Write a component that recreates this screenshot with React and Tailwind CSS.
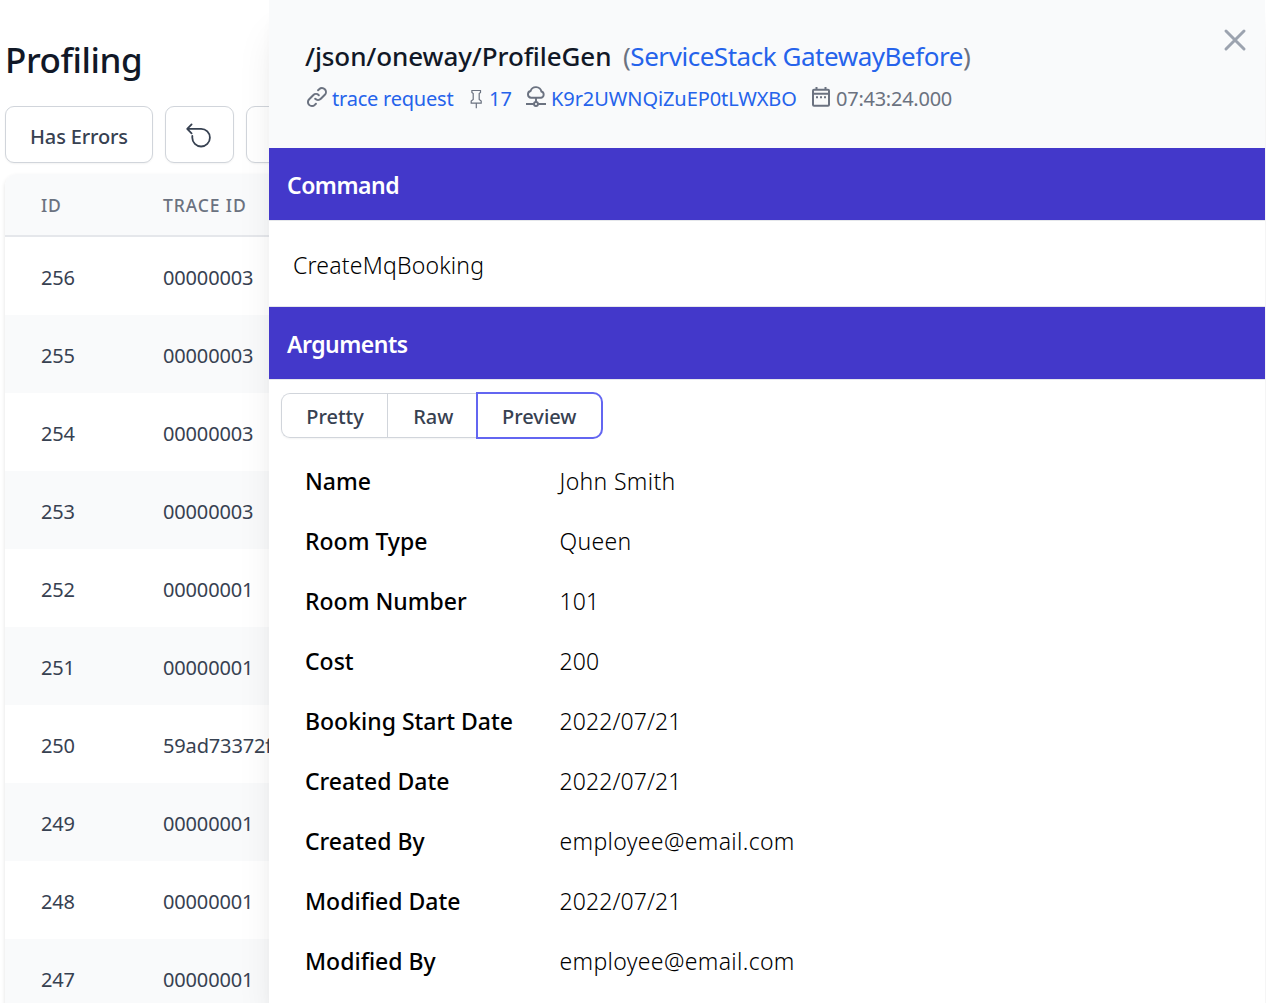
const rows = [
  ["256", "00000003"],
  ["255", "00000003"],
  ["254", "00000003"],
  ["253", "00000003"],
  ["252", "00000001"],
  ["251", "00000001"],
  ["250", "59ad73372f"],
  ["249", "00000001"],
  ["248", "00000001"],
  ["247", "00000001"],
];

const fields = [
  ["Name", "John Smith"],
  ["Room Type", "Queen"],
  ["Room Number", "101"],
  ["Cost", "200"],
  ["Booking Start Date", "2022/07/21"],
  ["Created Date", "2022/07/21"],
  ["Created By", "employee@email.com"],
  ["Modified Date", "2022/07/21"],
  ["Modified By", "employee@email.com"],
];

function UndoIcon() {
  return (
    <svg className="mr-[2px] h-7 w-7" viewBox="0 0 28 28" fill="none" stroke="currentColor" strokeWidth="1.8" strokeLinecap="round" strokeLinejoin="round">
      <path d="M6.6 3.4 2.2 7.9l4.4 4.5M2.6 7.9h13.5a8.8 8.8 0 1 1-8.8 8.8V15" />
    </svg>
  );
}

function LinkIcon() {
  return (
    <svg className="h-6 w-6" viewBox="0 0 24 24" fill="none" stroke="currentColor" strokeWidth="2" strokeLinecap="round" strokeLinejoin="round">
      <path d="M13.828 10.172a4 4 0 00-5.656 0l-4 4a4 4 0 105.656 5.656l1.102-1.101m-.758-4.899a4 4 0 005.656 0l4-4a4 4 0 00-5.656-5.656l-1.1 1.1" />
    </svg>
  );
}

function PinIcon() {
  return (
    <svg className="h-6 w-6" viewBox="0 0 24 24" fill="none" stroke="currentColor" strokeWidth="1.2">
      <path d="M7.9 5.5h8.6v2l-1.3 1v6l2 1.5v2.1H7.2V16l2-1.5v-6l-1.3-1zM12.3 18.1v5.2" />
    </svg>
  );
}

function CloudIcon() {
  return (
    <svg className="h-6 w-6" viewBox="0 0 24 24" fill="none" stroke="currentColor" strokeWidth="1.9">
      <path d="M7.1 12.7a3.4 3.4 0 0 1-.5-6.7 5.6 5.6 0 0 1 10.8.5 3.2 3.2 0 0 1-.3 6.2zM12 12.7v4.4M2 19h7.8M14.2 19H22" />
      <circle cx="12" cy="19" r="2" />
    </svg>
  );
}

function CalendarIcon() {
  return (
    <svg className="h-6 w-6" viewBox="0 0 24 24" fill="none" stroke="currentColor" strokeWidth="2">
      <rect x="4" y="4.8" width="16" height="16" rx="1" />
      <path d="M7.5 1.9V5M16.5 1.9V5M4 8.8h16" />
      <path d="M7 12.3h2M11 12.3h2M15 12.3h2" />
    </svg>
  );
}

function CloseIcon() {
  return (
    <svg className="h-9 w-9" viewBox="0 0 24 24" fill="none" stroke="currentColor" strokeWidth="2" strokeLinecap="round">
      <path d="M6 18L18 6M6 6l12 12" />
    </svg>
  );
}

function SectionTitle({ children }) {
  return (
    <h3 className="flex h-[73px] shrink-0 items-center border-b border-[#e5e7eb] bg-[#4338ca] pl-[18px] pt-[3px] text-[23px] font-semibold tracking-[-0.5px] text-white">
      {children}
    </h3>
  );
}

function Profiles() {
  return (
    <div className="w-[269px] shrink-0 overflow-hidden pl-[5px]">
      <h1 className="pt-[39px] text-[35px] font-medium leading-[42px] tracking-[-0.45px] text-[#111827]">Profiling</h1>
      <div className="mt-[25px] flex w-[400px] gap-3">
        <button className="flex h-[57px] w-[148px] items-center justify-center rounded-[9px] border border-[#d1d5db] bg-white pt-[4px] text-[20px] font-medium tracking-[-0.15px] text-[#374151] shadow-xs">Has Errors</button>
        <button className="flex h-[57px] w-[69px] items-center justify-center rounded-[9px] border border-[#d1d5db] bg-white text-[#374151] shadow-xs"><UndoIcon /></button>
        <button className="h-[57px] w-[69px] rounded-[9px] border border-[#d1d5db] bg-white shadow-xs" />
      </div>
      <div className="mt-[11px] w-[600px] overflow-hidden rounded-t-xl text-[#1f2937] shadow-[0_2px_4px_rgba(0,0,0,0.12)]">
        <div className="grid h-[63px] grid-cols-[122px_1fr] items-center border-b-2 border-[#e5e7eb] bg-[#f9fafb] pl-9 pt-[2px] text-[17.5px] font-medium tracking-[0.9px] text-[#6b7280]">
          <span>ID</span>
          <span>TRACE ID</span>
        </div>
        {rows.map(([id, trace]) => (
          <div key={id} className="grid h-[78px] grid-cols-[122px_1fr] items-center pl-9 pt-[4px] text-[20px] tracking-[-0.15px] text-[#374151] even:bg-white odd:bg-[#f9fafb]">
            <span>{id}</span>
            <span>{trace}</span>
          </div>
        ))}
      </div>
    </div>
  );
}

function Details() {
  return (
    <div className="z-10 flex w-[996px] shrink-0 flex-col bg-white shadow-[0_30px_38px_-8px_rgba(0,0,0,0.1),0_12px_15px_-9px_rgba(0,0,0,0.1)]">
      <header className="flex h-[148px] shrink-0 justify-between bg-[#f9fafb] pl-9 pr-3 text-[#6b7280]">
        <div className="whitespace-nowrap pt-[38px]">
          <h2 className="flex text-[26px] leading-9">
            <span className="w-[308px] font-medium tracking-[-0.1px] text-[#111827]">/json/oneway/ProfileGen</span>
            <span className="ml-[10px] tracking-[-0.46px]">(<a className="text-[#2563eb]">ServiceStack GatewayBefore</a>)</span>
          </h2>
          <div className="mt-px flex h-12 text-[20px] leading-[48px]">
            <span className="mt-[10px]"><LinkIcon /></span>
            <a className="ml-[3px] w-[121px] tracking-[-0.22px] text-[#2563eb]">trace request</a>
            <span className="ml-[11px] mt-[10px]"><PinIcon /></span>
            <a className="ml-px w-[23px] text-[#2563eb]">17</a>
            <span className="ml-[12px] mt-[10px]"><CloudIcon /></span>
            <a className="ml-[3px] w-[244px] tracking-[-0.08px] text-[#2563eb]">K9r2UWNQiZuEP0tLWXBO</a>
            <span className="ml-[14px] mt-[10px]"><CalendarIcon /></span>
            <span className="ml-[3px] tracking-[-0.25px]">07:43:24.000</span>
          </div>
        </div>
        <button className="mt-[22px] self-start text-[#9ca3af]"><CloseIcon /></button>
      </header>
      <SectionTitle>Command</SectionTitle>
      <div className="flex h-[86px] shrink-0 items-center border-b border-[#e5e7eb] pl-6 pt-[4px] text-[23px] font-light tracking-[0.2px] text-black">CreateMqBooking</div>
      <SectionTitle>Arguments</SectionTitle>
      <div className="flex px-3 pt-[12px] text-[20px] font-medium text-[#374151]">
        <div className="mt-px flex h-[45px] rounded-l-[9px] border border-r-0 border-[#d1d5db] shadow-xs">
          <button className="flex w-[106px] items-center justify-center border-r border-[#d1d5db] pl-px pt-[2px]">Pretty</button>
          <button className="flex w-[87.5px] items-center justify-center pl-[3px] pt-[2px]">Raw</button>
        </div>
        <button className="flex h-[47px] w-[127.5px] items-center justify-center rounded-r-[10px] border-2 border-[#6366f1] pt-[2px]">Preview</button>
      </div>
      <dl className="grid auto-rows-[60px] grid-cols-[254.5px_1fr] items-center pl-9 pt-[12px] text-[23px]">
        {fields.map(([name, value]) => (
          <div key={name} className="contents">
            <dt className="font-medium text-black">{name}</dt>
            <dd className={`font-light text-black ${/[a-z]/.test(value) ? "tracking-[0.34px]" : "tracking-[0.1px]"}`}>{value}</dd>
          </div>
        ))}
      </dl>
    </div>
  );
}

export default function App() {
  return (
    <div className="flex h-[1003px] w-[1266px] overflow-hidden bg-white font-['Noto_Sans','Open_Sans',sans-serif]">
      <Profiles />
      <Details />
    </div>
  );
}
